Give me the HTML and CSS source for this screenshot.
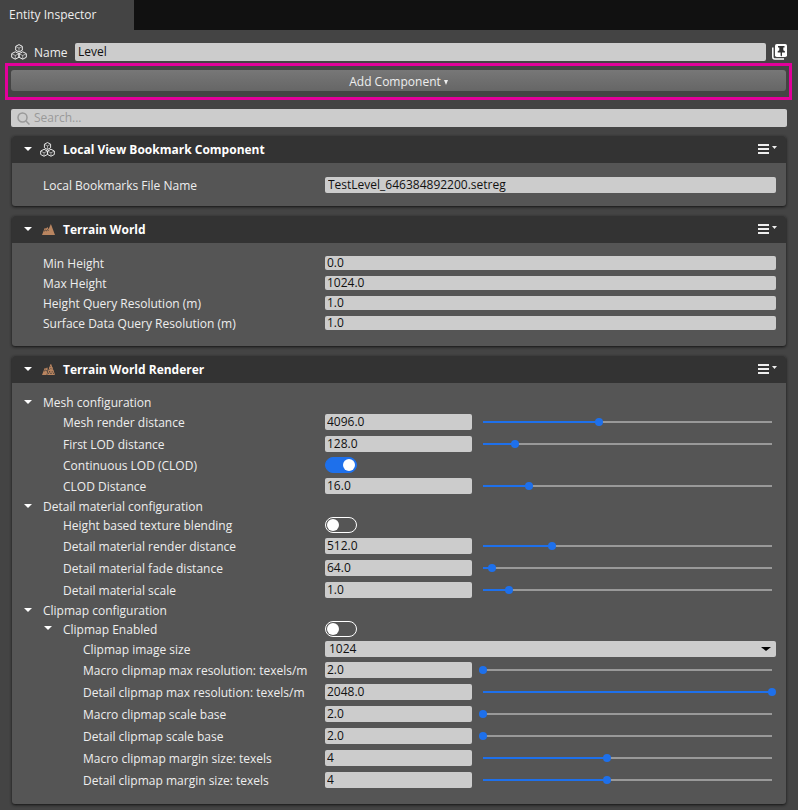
FILE: index.html
```html
<!DOCTYPE html>
<html lang="en">
<head>
  <meta charset="UTF-8" />
  <meta name="viewport" content="width=device-width, initial-scale=1.0" />
  <title>Entity Inspector</title>
  <link rel="stylesheet" href="styles.css">
</head>
<body>
  <svg width="0" height="0" class="symbols" aria-hidden="true">
    <symbol id="icon-cubes" viewBox="0 0 16 16">
      <g fill="none" stroke="currentColor" stroke-linejoin="round">
        <path d="M8 .6l3.300 1.700v3.900L8 8 4.700 6.200V2.300zM4.300 7.800l3.600 1.800v3.700l-3.600 1.900-3.600-1.900V9.600zM11.700 7.800l3.600 1.800v3.700l-3.600 1.900-3.600-1.900V9.600z" />
        <path stroke-width=".6" d="M5 2.600l3 1.500 3-1.500M8 4.100V8M1 9.900l3.300 1.600 3.400-1.600M4.300 11.500V15M8.300 9.900l3.400 1.600L15 9.900M11.700 11.500V15" />
      </g>
    </symbol>
    <symbol id="icon-terrain" viewBox="0 0 13 11">
      <path fill="#b98560" d="M0 11L2.700 4 4 4.600 5.500 3l1 2.200L8.900 0 13 11z" />
      <path fill="none" stroke="#333" stroke-width=".7" d="M2 7.300l1.300-1.200 1 .9 1.300-1.500.9 1.300" />
    </symbol>
    <symbol id="icon-terrain-mesh" viewBox="0 0 13 11">
      <path fill="#b98560" d="M0 11L2.700 4 4 4.600 5.200 3.300 5.800 5 4.600 11z" />
      <path fill="none" stroke="#333" stroke-width=".7" d="M2 7.300l1.300-1.200 1 .9 1-1.200" />
      <path fill="none" stroke="#b98560" d="M8.800.5L5.500 10.500h7zM7.700 3.500h2.400M6.800 6.500h4.400M7.700 3.500l1.300 3 1.200-3M6.500 6.700l1.200 3.600L9 6.700l1.300 3.600.9-3.600" />
    </symbol>
    <symbol id="icon-menu" viewBox="0 0 19 10">
      <path fill="#eee" d="M0 0h11v2H0zM0 4h11v2H0zM0 8h11v2H0z" />
      <path fill="#eee" d="M14 2h5l-2.500 3z" />
    </symbol>
  </svg>

  <div class="tabs">
    <div class="tab">Entity Inspector</div>
  </div>

  <div class="name-row">
    <svg class="cubes-icon"><use href="#icon-cubes" /></svg>
    <label for="entityName">Name</label>
    <input type="text" class="field" id="entityName" value="Level" />
    <button class="pin-btn" aria-label="Pin inspector">
      <svg viewBox="0 0 16 16">
        <path fill="none" stroke="#fff" stroke-width="1.5" d="M.8 3.500v9.500q0 2 2 2h9.200" />
        <rect x="3" y="0" width="12" height="13" rx="1.800" fill="#fff" />
        <path fill="#333" d="M6 2h6.500v1.500h-1.200v2.700l1.600 1v1.400H10v2.900l-.7 1-.7-1V8.600H5.700V7.200l1.600-1V3.500H6z" />
      </svg>
    </button>
  </div>

  <div class="highlight">
    <button class="add-btn">Add Component<span class="add-caret"></span></button>
  </div>

  <div class="search">
    <svg viewBox="0 0 13 13"><circle cx="5.500" cy="5.500" r="4.500" /><path d="M8.700 8.700l3.800 3.800" /></svg>
    <input type="text" class="field" id="search" placeholder="Search..." aria-label="Search" />
  </div>

  <div class="card">
    <div class="card-header">
      <button class="expander" aria-label="Collapse"></button>
      <svg class="card-icon"><use href="#icon-cubes" /></svg>
      <h2>Local View Bookmark Component</h2>
      <button class="menu-btn" aria-label="Menu"><svg><use href="#icon-menu" /></svg></button>
    </div>
    <div class="card-body single">
      <div class="row">
        <label for="bookmarkFile">Local Bookmarks File Name</label>
        <input type="text" class="field" id="bookmarkFile" value="TestLevel_646384892200.setreg" />
      </div>
    </div>
  </div>

  <div class="card">
    <div class="card-header">
      <button class="expander" aria-label="Collapse"></button>
      <svg class="card-icon terrain"><use href="#icon-terrain" /></svg>
      <h2>Terrain World</h2>
      <button class="menu-btn" aria-label="Menu"><svg><use href="#icon-menu" /></svg></button>
    </div>
    <div class="card-body">
      <div class="row">
        <label for="minHeight">Min Height</label>
        <input type="text" class="field number short" id="minHeight" value="0.0" />
      </div>
      <div class="row">
        <label for="maxHeight">Max Height</label>
        <input type="text" class="field number short" id="maxHeight" value="1024.0" />
      </div>
      <div class="row">
        <label for="heightRes">Height Query Resolution (m)</label>
        <input type="text" class="field number short" id="heightRes" value="1.0" />
      </div>
      <div class="row">
        <label for="surfaceRes">Surface Data Query Resolution (m)</label>
        <input type="text" class="field number short" id="surfaceRes" value="1.0" />
      </div>
    </div>
  </div>

  <div class="card">
    <div class="card-header">
      <button class="expander" aria-label="Collapse"></button>
      <svg class="card-icon terrain"><use href="#icon-terrain-mesh" /></svg>
      <h2>Terrain World Renderer</h2>
      <button class="menu-btn" aria-label="Menu"><svg><use href="#icon-menu" /></svg></button>
    </div>
    <div class="card-body">
      <div class="group-row">
        <button class="expander" aria-label="Collapse"></button>
        <span>Mesh configuration</span>
      </div>
      <div class="row slider-row level-2">
        <label for="meshDistance">Mesh render distance</label>
        <input type="text" class="field number" id="meshDistance" value="4096.0" />
        <input type="range" min="0" max="100" value="40" aria-label="Mesh render distance" />
      </div>
      <div class="row slider-row level-2">
        <label for="firstLod">First LOD distance</label>
        <input type="text" class="field number" id="firstLod" value="128.0" />
        <input type="range" min="0" max="100" value="11" aria-label="First LOD distance" />
      </div>
      <div class="row level-2">
        <label for="clod">Continuous LOD (CLOD)</label>
        <input type="checkbox" class="toggle" id="clod" checked />
      </div>
      <div class="row slider-row level-2">
        <label for="clodDistance">CLOD Distance</label>
        <input type="text" class="field number" id="clodDistance" value="16.0" />
        <input type="range" min="0" max="100" value="16" aria-label="CLOD Distance" />
      </div>

      <div class="group-row">
        <button class="expander" aria-label="Collapse"></button>
        <span>Detail material configuration</span>
      </div>
      <div class="row level-2">
        <label for="blending">Height based texture blending</label>
        <input type="checkbox" class="toggle" id="blending" />
      </div>
      <div class="row slider-row level-2">
        <label for="detailRender">Detail material render distance</label>
        <input type="text" class="field number" id="detailRender" value="512.0" />
        <input type="range" min="0" max="100" value="24" aria-label="Detail material render distance" />
      </div>
      <div class="row slider-row level-2">
        <label for="detailFade">Detail material fade distance</label>
        <input type="text" class="field number" id="detailFade" value="64.0" />
        <input type="range" min="0" max="100" value="3" aria-label="Detail material fade distance" />
      </div>
      <div class="row slider-row level-2">
        <label for="detailScale">Detail material scale</label>
        <input type="text" class="field number" id="detailScale" value="1.0" />
        <input type="range" min="0" max="100" value="9" aria-label="Detail material scale" />
      </div>

      <div class="group-row">
        <button class="expander" aria-label="Collapse"></button>
        <span>Clipmap configuration</span>
      </div>
      <div class="row">
        <div class="row-label">
          <button class="expander" aria-label="Collapse"></button>
          <label for="clipmapEnabled">Clipmap Enabled</label>
        </div>
        <input type="checkbox" class="toggle" id="clipmapEnabled" />
      </div>
      <div class="row level-3">
        <label for="imageSize">Clipmap image size</label>
        <div class="select-box">
          <select class="field" id="imageSize">
            <option>512</option>
            <option selected>1024</option>
            <option>2048</option>
          </select>
        </div>
      </div>
      <div class="row slider-row level-3">
        <label for="macroRes">Macro clipmap max resolution: texels/m</label>
        <input type="text" class="field number" id="macroRes" value="2.0" />
        <input type="range" min="0" max="100" value="0" aria-label="Macro clipmap max resolution" />
      </div>
      <div class="row slider-row level-3">
        <label for="detailRes">Detail clipmap max resolution: texels/m</label>
        <input type="text" class="field number" id="detailRes" value="2048.0" />
        <input type="range" min="0" max="100" value="100" aria-label="Detail clipmap max resolution" />
      </div>
      <div class="row slider-row level-3">
        <label for="macroBase">Macro clipmap scale base</label>
        <input type="text" class="field number" id="macroBase" value="2.0" />
        <input type="range" min="0" max="100" value="0" aria-label="Macro clipmap scale base" />
      </div>
      <div class="row slider-row level-3">
        <label for="detailBase">Detail clipmap scale base</label>
        <input type="text" class="field number" id="detailBase" value="2.0" />
        <input type="range" min="0" max="100" value="0" aria-label="Detail clipmap scale base" />
      </div>
      <div class="row slider-row level-3">
        <label for="macroMargin">Macro clipmap margin size: texels</label>
        <input type="text" class="field number" id="macroMargin" value="4" />
        <input type="range" min="0" max="100" value="43" aria-label="Macro clipmap margin size" />
      </div>
      <div class="row slider-row level-3">
        <label for="detailMargin">Detail clipmap margin size: texels</label>
        <input type="text" class="field number" id="detailMargin" value="4" />
        <input type="range" min="0" max="100" value="43" aria-label="Detail clipmap margin size" />
      </div>
    </div>
  </div>

  <script>
    // keep the blue part of each slider in step with its value
    function updateFill(slider) {
      slider.style.setProperty("--fill", slider.value / slider.max);
    }

    document.querySelectorAll("input[type=range]").forEach(slider => {
      updateFill(slider);
      slider.addEventListener("input", () => updateFill(slider));
    });
  </script>
</body>
</html>
```
FILE: styles.css
```css
* {
  box-sizing: border-box;
}
body {
  margin: 0;
  background-color: #444;
  color: #eee;
  font-family: "Open Sans", "Noto Sans", sans-serif;
  font-size: 12px;
  line-height: 16px;
}
button, input, select {
  font: inherit;
  color: inherit;
  margin: 0;
}
button {
  padding: 0;
  border: none;
  background: none;
  cursor: pointer;
}
svg {
  display: block;
}
.symbols {
  position: absolute;
}

/* tab strip */
.tabs {
  display: flex;
  height: 30px;
  background-color: #111;
}
.tab {
  width: 134px;
  padding: 7px 9px;
  background-color: #444;
}

/* name */
.name-row {
  display: flex;
  align-items: center;
  margin: 13px 10px 2px 11px;
  height: 18px;
}
.name-row label {
  width: 41px;
  margin-left: 7px;
  padding-top: 2px;
}
.name-row .field {
  flex: 1;
  height: 18px;
  padding-bottom: 2px;
}
.cubes-icon {
  width: 16px;
  height: 16px;
}
.pin-btn {
  margin-left: 6px;
}
.pin-btn svg {
  width: 16px;
  height: 16px;
}

.field {
  min-width: 0;
  height: 16px;
  padding: 0 3px;
  border: none;
  border-radius: 2px;
  background-color: #ccc;
  color: #111;
}
.field.number {
  padding: 0 2px 1px;
}
.field.short {
  height: 14px;
}

/* add component */
.highlight {
  margin: 0 6px 0 5px;
  padding: 4px 3px 6px;
  border: 3px solid #e3009b;
}
.add-btn {
  display: flex;
  align-items: center;
  justify-content: center;
  width: 100%;
  height: 21px;
  padding-top: 3px;
  border-radius: 3px;
  background: linear-gradient(#777, #666);
}
.add-caret {
  margin-left: 3px;
  border: 2px solid transparent;
  border-top: 5px solid #eee;
  border-bottom: none;
}

/* search */
.search {
  display: flex;
  align-items: center;
  margin: 9px 11px;
  height: 18px;
  border-radius: 2px;
  background-color: #ccc;
}
.search svg {
  width: 13px;
  height: 13px;
  margin: 0 4px 0 6px;
  fill: none;
  stroke: #999;
  stroke-width: 1.5;
}
.search .field {
  flex: 1;
  padding: 0;
}
.search .field::placeholder {
  color: #999;
}

/* component cards */
.card {
  margin: 0 12px 10px;
  border-radius: 3px;
  background-color: #555;
  box-shadow: 0 1px 3px #111;
}
.card:last-of-type {
  margin-bottom: 6px;
}
.card-header {
  display: flex;
  align-items: center;
  height: 27px;
  padding: 0 9px 0 12px;
  border-radius: 3px 3px 0 0;
  background-color: #333;
}
.card-header h2 {
  flex: 1;
  margin: 0;
  font-size: 12px;
  color: #fff;
}
.card-icon {
  width: 15px;
  height: 15px;
  margin: 0 8px;
}
.card-icon.terrain {
  width: 13px;
  height: 11px;
  margin: 0 8px 0 10px;
}
.menu-btn {
  padding-bottom: 1px;
}
.menu-btn svg {
  width: 19px;
  height: 10px;
}
.expander {
  flex: none;
  height: 6px;
  padding-bottom: 2px;
}
.expander::before {
  content: "";
  display: block;
  border: 4px solid transparent;
  border-top-color: #fff;
  border-bottom: none;
}
.card-body {
  padding: 10px 10px 13px 31px;
}
.card-body.single {
  padding-top: 12px;
  padding-bottom: 11px;
}

.row {
  display: grid;
  grid-template-columns: 282px 1fr;
  align-items: center;
  height: 20px;
}
.row label {
  padding-top: 1px;
}
.slider-row {
  grid-template-columns: 282px 147px 1fr;
  height: 22px;
}
.level-2 label {
  padding-left: 20px;
}
.level-3 label {
  padding-left: 40px;
}
.group-row, .row-label {
  display: flex;
  align-items: center;
  gap: 11px;
}
.group-row {
  height: 18px;
  margin-left: -19px;
  padding-top: 1px;
}
.row-label {
  padding-left: 1px;
}

/* toggle switch */
.toggle {
  appearance: none;
  display: flex;
  align-items: center;
  width: 32px;
  height: 16px;
  padding: 0 1px;
  border: 1px solid #fff;
  border-radius: 8px;
}
.toggle::before {
  content: "";
  width: 12px;
  height: 12px;
  border-radius: 50%;
  background-color: #fff;
}
.toggle:checked {
  justify-content: flex-end;
  border-color: #1e70eb;
  background-color: #1e70eb;
}

/* drop-down */
.select-box {
  position: relative;
}
.select-box select {
  appearance: none;
  display: block;
  width: 100%;
  padding: 0 4px;
}
.select-box::after {
  content: "";
  position: absolute;
  right: 5px;
  top: 6px;
  border: 5px solid transparent;
  border-top: 4px solid #000;
  border-bottom: none;
  pointer-events: none;
}

/* slider: the bar runs between the two end positions of the thumb centre */
input[type=range] {
  appearance: none;
  min-width: 0;
  height: 12px;
  margin-left: 7px;
  background:
    linear-gradient(#1e70eb, #1e70eb) 4px center / calc((100% - 8px) * var(--fill)) 2px no-repeat,
    linear-gradient(#999, #999) center / calc(100% - 8px) 2px no-repeat;
}
input[type=range]::-webkit-slider-thumb {
  appearance: none;
  width: 8px;
  height: 8px;
  border-radius: 50%;
  background-color: #1e70eb;
}
```
